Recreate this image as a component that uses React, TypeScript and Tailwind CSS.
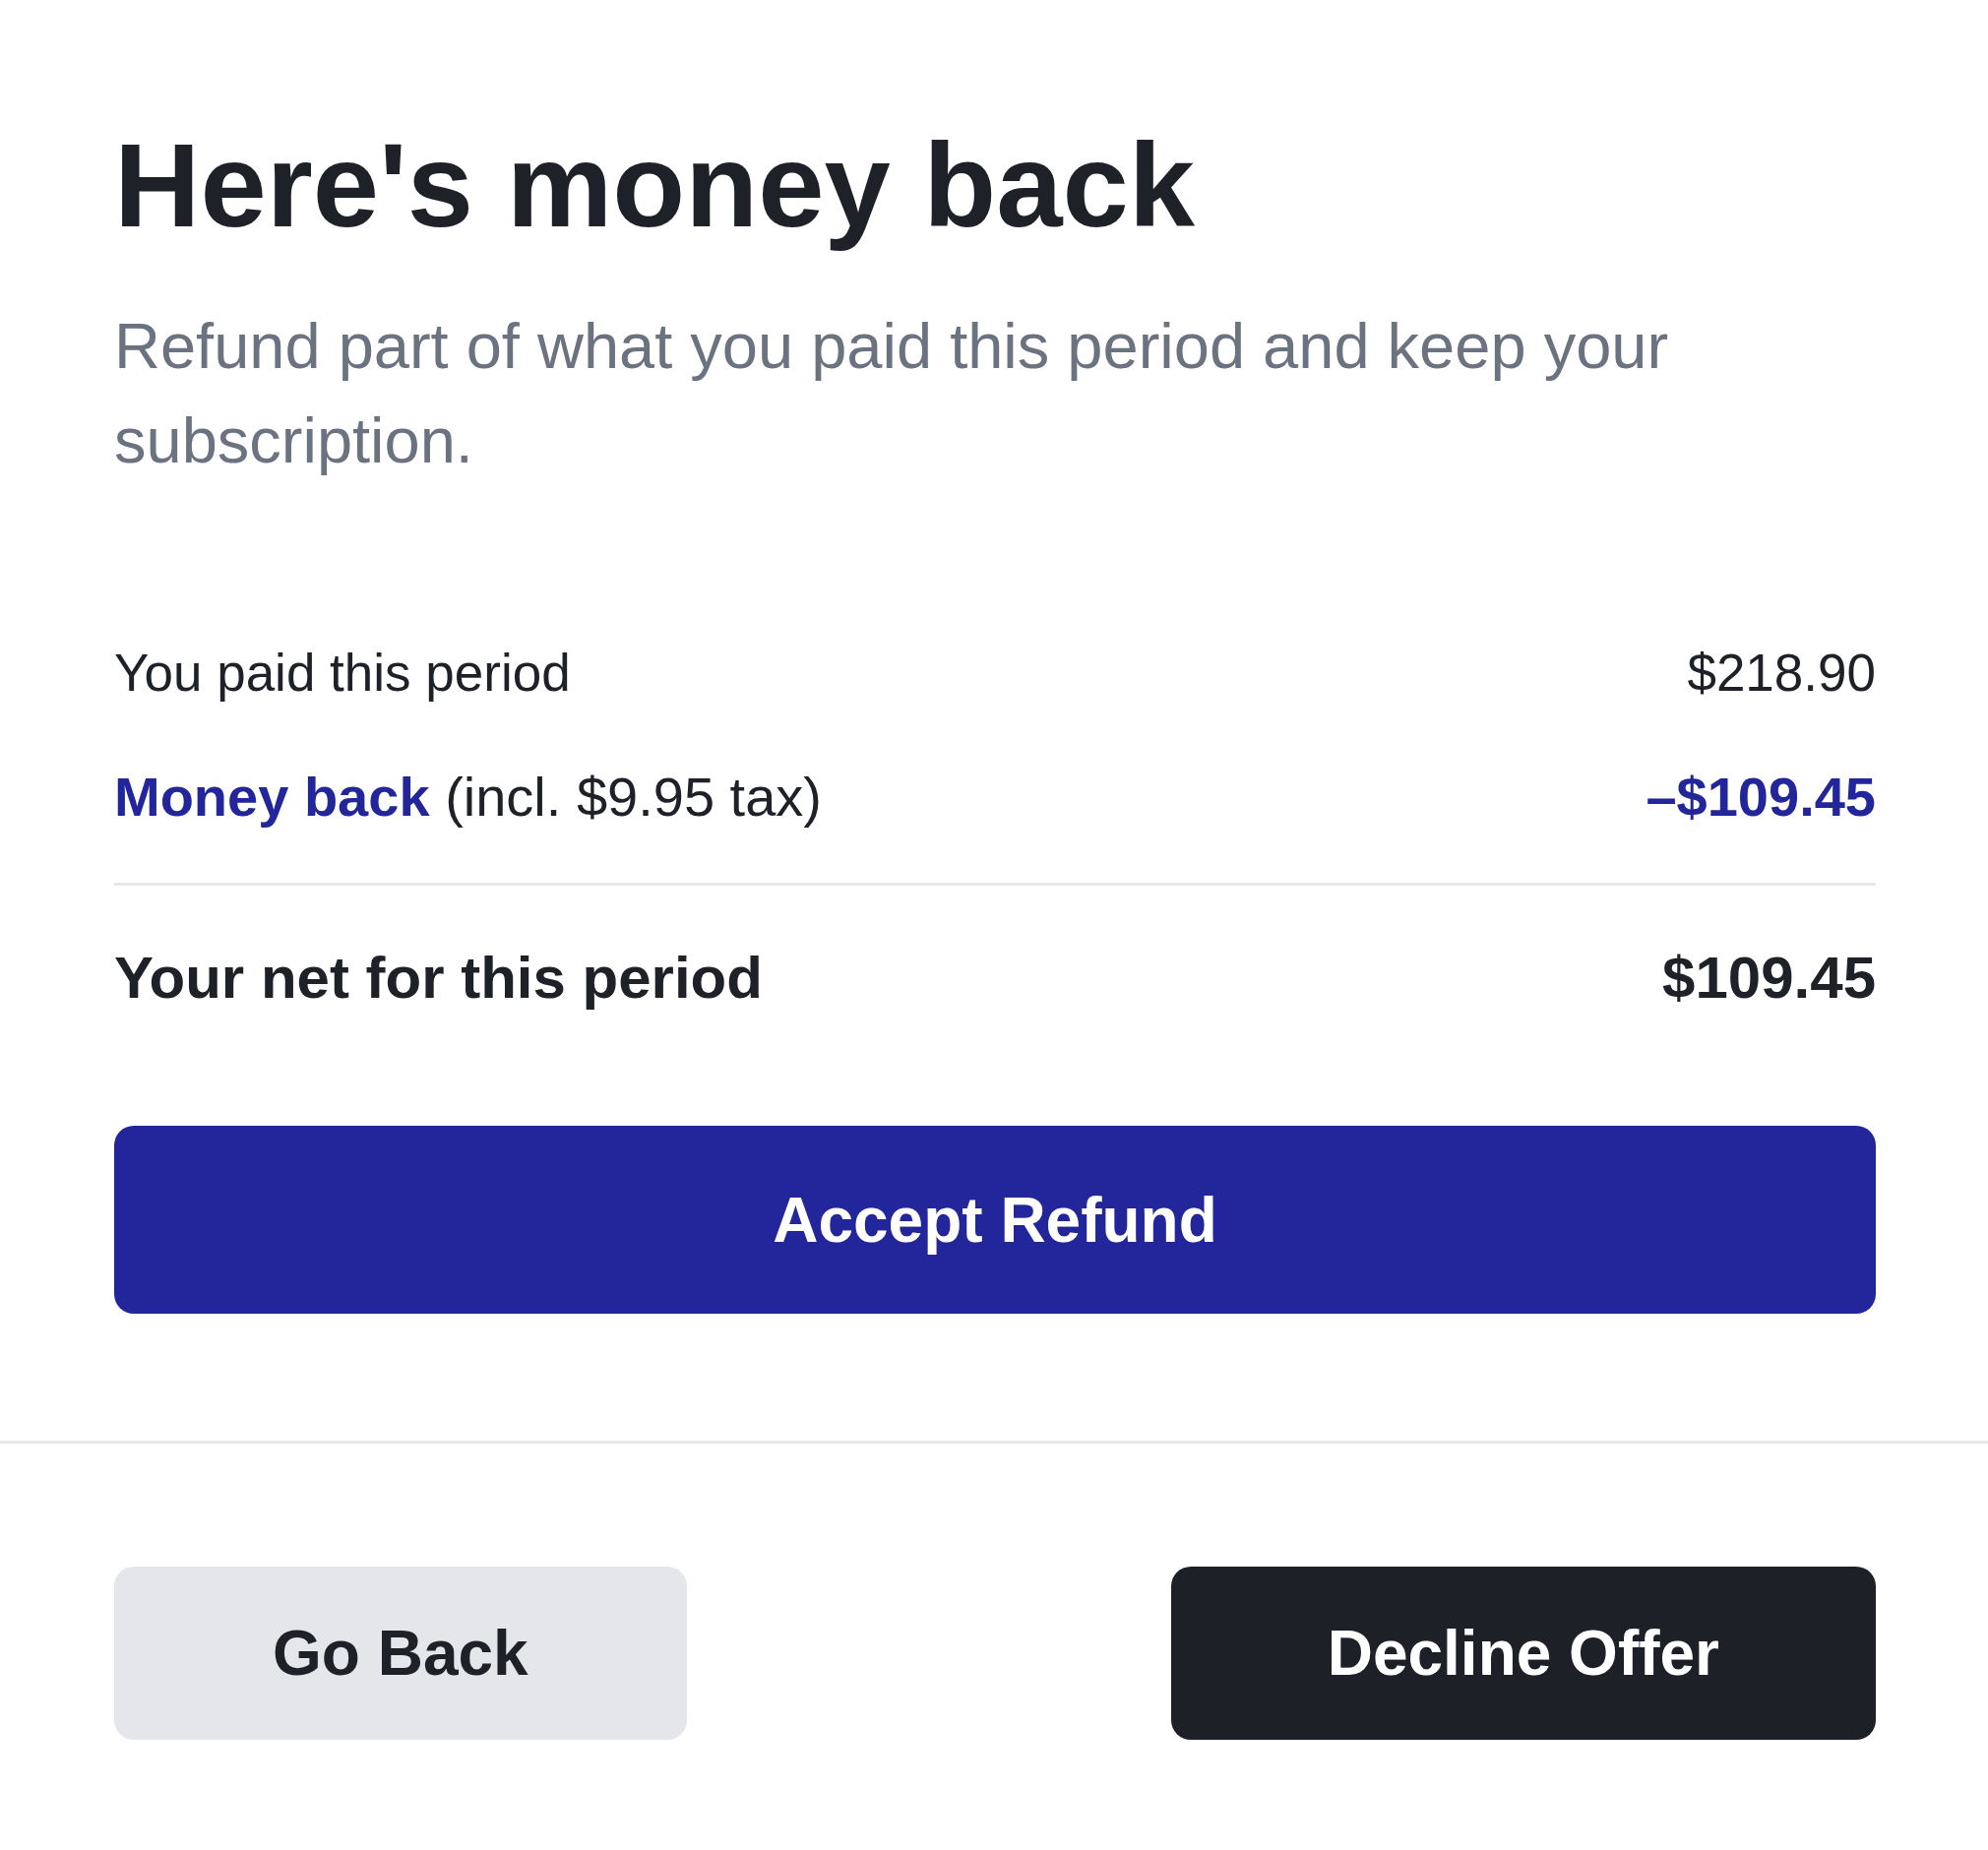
import { FC } from "react";

const rows = [
  { label: "You paid this period", value: "$218.90" },
];

const RefundOffer: FC = () => {
  return (
    <div className="w-[2020px] h-[1880px] bg-white text-[#1f2129] font-['Liberation_Sans',Arial,Helvetica,sans-serif]">
      {/* offer */}
      <div className="pl-[116px] pr-[114px] pt-[116px] pb-[129px]">
        <h1 className="text-[121px] leading-[145px] font-bold">
          Here's money back
        </h1>
        <p className="mt-[43px] text-[65px] leading-[96px] text-[#6b7280]">
          Refund part of what you paid this period and keep your subscription.
        </p>

        {/* breakdown */}
        <div className="mt-[149px]">
          {rows.map((r) => (
            <div
              key={r.label}
              className="flex justify-between text-[53px] leading-[78px]"
            >
              <span>{r.label}</span>
              <span>{r.value}</span>
            </div>
          ))}
          <div className="mt-[46px] flex justify-between text-[56px] leading-[82px]">
            <span>
              <span className="font-bold text-[#23259a]">Money back</span>{" "}
              (incl. $9.95 tax)
            </span>
            <span className="font-bold text-[#23259a]">–$109.45</span>
          </div>
          <div className="mt-[46px] h-[3px] bg-[#e5e7eb]" />
          <div className="mt-[50px] flex justify-between text-[60px] leading-[88px] font-bold">
            <span>Your net for this period</span>
            <span>$109.45</span>
          </div>
        </div>

        <button className="mt-[106px] w-full h-[191px] rounded-[20px] bg-[#23259a] text-white text-[64px] font-bold">
          Accept Refund
        </button>
      </div>

      {/* footer */}
      <div className="border-t-[3px] border-[#e5e7eb] pl-[116px] pr-[114px] pt-[125px] flex justify-between">
        <button className="h-[176px] px-[161px] rounded-[20px] bg-[#e5e6ea] text-[64px] font-bold">
          Go Back
        </button>
        <button className="h-[176px] px-[159px] rounded-[20px] bg-[#1e2028] text-white text-[64px] font-bold">
          Decline Offer
        </button>
      </div>
    </div>
  );
};

export default function App() {
  return <RefundOffer />;
}
